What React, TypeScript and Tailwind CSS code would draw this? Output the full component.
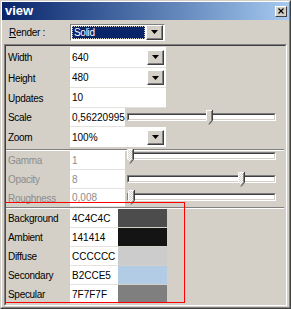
import { ReactNode } from "react";

const font = { fontFamily: '"Liberation Sans", Arial, sans-serif' };

function DropButton() {
  return (
    <div className="w-[17px] h-[15px] bg-[#d4d0c8] border border-t-white border-l-white border-r-[#404040] border-b-[#404040] flex items-center justify-center shadow-[inset_-1px_-1px_0_#808080]">
      <svg width="7" height="4" viewBox="0 0 7 4">
        <path d="M0 0h7L3.5 4z" fill="#000" />
      </svg>
    </div>
  );
}

function Slider({ pos, disabled }: { pos: number; disabled?: boolean }) {
  return (
    <div className="relative w-[149px] h-[8px] mt-[-2px]">
      <div className="absolute inset-0 border border-t-[#808080] border-l-[#808080] border-r-white border-b-white">
        <div className="w-full h-full border border-t-[#404040] border-l-[#404040] border-r-[#d4d0c8] border-b-[#d4d0c8] bg-white" />
      </div>
      <svg className="absolute top-[-3px]" style={{ left: pos }} width="7" height="15" viewBox="0 0 7 15">
        <defs>
          <pattern id="hatch" width="2" height="2" patternUnits="userSpaceOnUse">
            <rect width="2" height="2" fill="#ffffff" />
            <rect width="1" height="1" fill="#d4d0c8" />
            <rect x="1" y="1" width="1" height="1" fill="#d4d0c8" />
          </pattern>
        </defs>
        <path d="M0.5 0.5h5v10l-2.5 3.5l-2.5-3.5z" fill={disabled ? "url(#hatch)" : "#d4d0c8"} stroke="none" />
        <path d="M0.5 10.5V0.5h5" fill="none" stroke="#ffffff" />
        <path d="M6.5 0v10.5L3 14.5" fill="none" stroke="#404040" />
        <path d="M5.5 1v9.5L3 13.5" fill="none" stroke="#808080" />
      </svg>
    </div>
  );
}

function Row({
  label,
  h,
  children,
  disabled,
}: {
  label: string;
  h: string;
  children: ReactNode;
  disabled?: boolean;
}) {
  return (
    <div className={`flex items-stretch ${h}`}>
      <div
        className={`w-[64px] shrink-0 pl-[2px] flex items-center ${
          disabled ? "text-[#8c8c8c]" : "text-black"
        }`}
      >
        {label}
      </div>
      {children}
    </div>
  );
}

function Value({ text, w, disabled }: { text: string; w: string; disabled?: boolean }) {
  return (
    <div
      className={`${w} bg-white border-b border-[#e4e2dc] pl-[2px] flex items-center overflow-hidden whitespace-nowrap tracking-normal ${
        disabled ? "text-[#8c8c8c]" : "text-black"
      }`}
    >
      {text}
    </div>
  );
}

function Separator() {
  return <div className="h-[2px] border-t border-[#808080] border-b border-b-white mr-[1px]" />;
}

const colors = [
  { label: "Background", hex: "4C4C4C" },
  { label: "Ambient", hex: "141414" },
  { label: "Diffuse", hex: "CCCCCC" },
  { label: "Secondary", hex: "B2CCE5" },
  { label: "Specular", hex: "7F7F7F" },
];

export default function App() {
  return (
    <div
      className="relative w-[291px] h-[309px] bg-[#d4d0c8] border border-t-[#d4d0c8] border-l-[#d4d0c8] border-r-[#404040] border-b-[#404040] text-[10px] tracking-[-0.3px] overflow-hidden"
      style={font}
    >
      <div className="h-full border border-t-white border-l-white border-r-[#808080] border-b-[#808080] flex flex-col">
        <div className="h-[18px] bg-gradient-to-r from-[#0a246a] to-[#a6caf0] flex items-center justify-between pl-[3px] pr-[2px]">
          <span className="text-white font-bold text-[13px] tracking-normal">view</span>
          <div className="w-[12px] h-[11px] bg-[#d4d0c8] border border-t-white border-l-white border-r-[#404040] border-b-[#404040] flex items-center justify-center">
            <svg width="6" height="6" viewBox="0 0 6 6">
              <path d="M0.5 0.5l5 5M5.5 0.5l-5 5" stroke="#000" strokeWidth="1.2" />
            </svg>
          </div>
        </div>

        <div className="flex items-center h-[20px] mt-[2px] pl-[7px]">
          <span className="w-[61px]">
            <span className="underline">R</span>ender :
          </span>
          <div className="w-[95px] h-[17px] bg-white border border-t-[#808080] border-l-[#808080] border-r-white border-b-white flex items-center pl-[1px] pr-[1px]">
            <div className="flex-1 h-[13px] bg-[#0a246a] text-white border border-dotted border-[#d4d0c8] flex items-center pl-[1px] mr-[1px]">
              Solid
            </div>
            <DropButton />
          </div>
        </div>

        <div className="flex-1 mx-[2px] mt-[2px] mb-[1px] border border-t-[#808080] border-l-[#808080] border-r-white border-b-white">
          <div className="h-full border border-t-[#404040] border-l-[#404040] border-r-[#d4d0c8] border-b-[#d4d0c8] pt-[1px]">
            <Row label="Width" h="h-[21px]">
              <div className="w-[96px] bg-white border-b border-[#e4e2dc] flex items-center justify-between pl-[2px] pr-[2px] tracking-normal">
                640
                <DropButton />
              </div>
            </Row>
            <Row label="Height" h="h-[20px]">
              <div className="w-[96px] bg-white border-b border-[#e4e2dc] flex items-center justify-between pl-[2px] pr-[2px] tracking-normal">
                480
                <DropButton />
              </div>
            </Row>
            <Row label="Updates" h="h-[20px]">
              <Value text="10" w="w-[96px]" />
            </Row>
            <Row label="Scale" h="h-[19px]">
              <Value text="0,56220995" w="w-[55px]" />
              <div className="flex items-center pl-[2px]">
                <Slider pos={79} />
              </div>
            </Row>
            <Row label="Zoom" h="h-[20px]">
              <div className="w-[96px] bg-white flex items-center justify-between pl-[2px] pr-[2px] tracking-normal">
                100%
                <DropButton />
              </div>
            </Row>
            <div className="h-[2px]" />
            <Separator />
            <Row label="Gamma" h="h-[19px]" disabled>
              <Value text="1" w="w-[55px]" disabled />
              <div className="flex items-start pt-[3px] pl-[2px]">
                <Slider pos={0} disabled />
              </div>
            </Row>
            <Row label="Opacity" h="h-[19px]" disabled>
              <Value text="8" w="w-[55px]" disabled />
              <div className="flex items-center pl-[2px]">
                <Slider pos={111} disabled />
              </div>
            </Row>
            <Row label="Roughness" h="h-[18px]" disabled>
              <Value text="0,008" w="w-[55px]" disabled />
              <div className="flex items-center pl-[2px]">
                <Slider pos={1} disabled />
              </div>
            </Row>
            <Separator />
            {colors.map((c) => (
              <Row key={c.label} label={c.label} h="h-[19px]">
                <Value text={c.hex} w="w-[48px]" />
                <div className="w-[49px] border-b border-[#d4d0c8]" style={{ backgroundColor: `#${c.hex}` }} />
              </Row>
            ))}
          </div>
        </div>
      </div>
      <div className="absolute left-[4px] top-[201px] w-[180px] h-[101px] border border-[#ff0000] pointer-events-none" />
    </div>
  );
}
